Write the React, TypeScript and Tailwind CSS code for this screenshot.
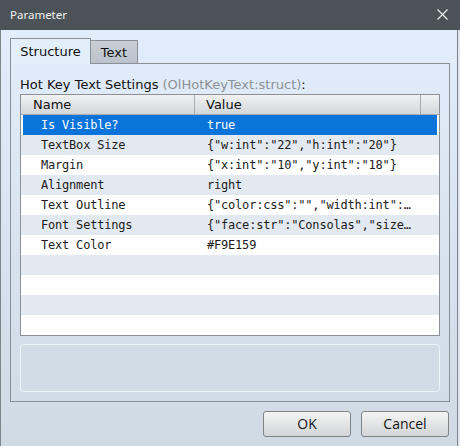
import React from "react";

const rows = [
  { name: "Is Visible?", value: "true" },
  { name: "TextBox Size", value: '{"w:int":"22","h:int":"20"}' },
  { name: "Margin", value: '{"x:int":"10","y:int":"18"}' },
  { name: "Alignment", value: "right" },
  { name: "Text Outline", value: '{"color:css":"","width:int":…' },
  { name: "Font Settings", value: '{"face:str":"Consolas","size…' },
  { name: "Text Color", value: "#F9E159" },
  { name: "", value: "" },
  { name: "", value: "" },
  { name: "", value: "" },
  { name: "", value: "" },
];

function Row({ name, value, index }: { name: string; value: string; index: number }) {
  const selected = index === 0;
  const bg = selected ? "bg-white" : index % 2 === 1 ? "bg-[#e3e9f0]" : "bg-white";
  return (
    <div className={`h-[20px] flex ${bg}`}>
      <div
        className={`flex flex-1 items-center font-['DejaVu_Sans_Mono',monospace] text-[12px] tracking-[-0.2px] ${
          selected ? "mx-[2px] bg-[#0b74db] text-white" : "text-[#1b1b1b]"
        }`}
      >
        <span className={`${selected ? "w-[173px] pl-[18px]" : "w-[175px] pl-[20px]"} whitespace-pre`}>{name}</span>
        <span className="pl-[11px] whitespace-pre">{value}</span>
      </div>
    </div>
  );
}

function Button({ label }: { label: string }) {
  return (
    <button className="w-[88px] h-[26px] rounded-[3px] border border-[#7f8285] bg-gradient-to-b from-[#f4f4f4] to-[#d3d5d7] font-['Open_Sans',sans-serif] text-[14px] text-[#151515] leading-none">
      {label}
    </button>
  );
}

export default function App() {
  return (
    <div className="w-[460px] h-[446px] flex flex-col overflow-hidden bg-[#dce4ec]">
      <div className="h-[30px] bg-[#4b5358] flex items-center justify-between pl-[10px] pr-[12px]">
        <span className="font-['Noto_Sans',sans-serif] text-[11.5px] text-[#f2f2f2]">Parameter</span>
        <svg width="11" height="11" viewBox="0 0 11 11" className="mt-[-1px]">
          <path d="M0.5 0.5 L10.5 10.5 M10.5 0.5 L0.5 10.5" stroke="#f0f0f0" strokeWidth="1.1" />
        </svg>
      </div>
      <div className="flex flex-1">
        <div className="w-[458px] flex flex-col border-x border-[#7e868c] bg-gradient-to-b from-[#e2edfb] to-[#cfdae5] pl-[9px] pr-[7px] pt-[9px]">
          <div className="flex items-end h-[25px]">
            <div className="h-[26px] w-[81px] border border-b-0 border-[#8a9096] bg-[#e3eefb] relative z-10 flex items-center justify-center font-['DejaVu_Sans',sans-serif] text-[13px] text-[#111]">
              Structure
            </div>
            <div className="h-[24px] w-[47px] border border-l-0 border-b-0 border-[#8a9096] bg-gradient-to-b from-[#c8cfd7] to-[#b9c1ca] flex items-center justify-center font-['DejaVu_Sans',sans-serif] text-[13px] text-[#111]">
              Text
            </div>
          </div>
          <div className="-mt-[1px] border border-[#8a9096] px-[9px] pt-[13px] pb-[9px] flex flex-col">
            <div className="h-[16px] leading-[16px] font-['DejaVu_Sans',sans-serif] text-[13px] text-[#111] whitespace-nowrap">
              Hot Key Text Settings <span className="text-[#8b9196]">(OlHotKeyText:struct)</span>:
            </div>
            <div className="mt-[1px] border border-[#8a9096] bg-white">
              <div className="h-[20px] flex border-b border-[#a6abb0] bg-gradient-to-b from-[#f2f2f2] to-[#d2d6da] font-['DejaVu_Sans',sans-serif] text-[13px] text-[#111]">
                <div className="w-[174px] pl-[12px] flex items-center border-r border-[#a6abb0]">Name</div>
                <div className="w-[226px] pl-[11px] flex items-center border-r border-[#a6abb0]">Value</div>
                <div className="flex-1" />
              </div>
              {rows.map((r, i) => (
                <Row key={i} name={r.name} value={r.value} index={i} />
              ))}
            </div>
            <div className="mt-[8px] h-[48px] rounded-[4px] border border-[#eef3f8] bg-[#d1dce7]" />
          </div>
          <div className="flex justify-end gap-[10px] mt-[9px] pr-[1px]">
            <Button label="OK" />
            <Button label="Cancel" />
          </div>
        </div>
        <div className="flex-1 bg-[#dfe6ee]" />
      </div>
    </div>
  );
}
